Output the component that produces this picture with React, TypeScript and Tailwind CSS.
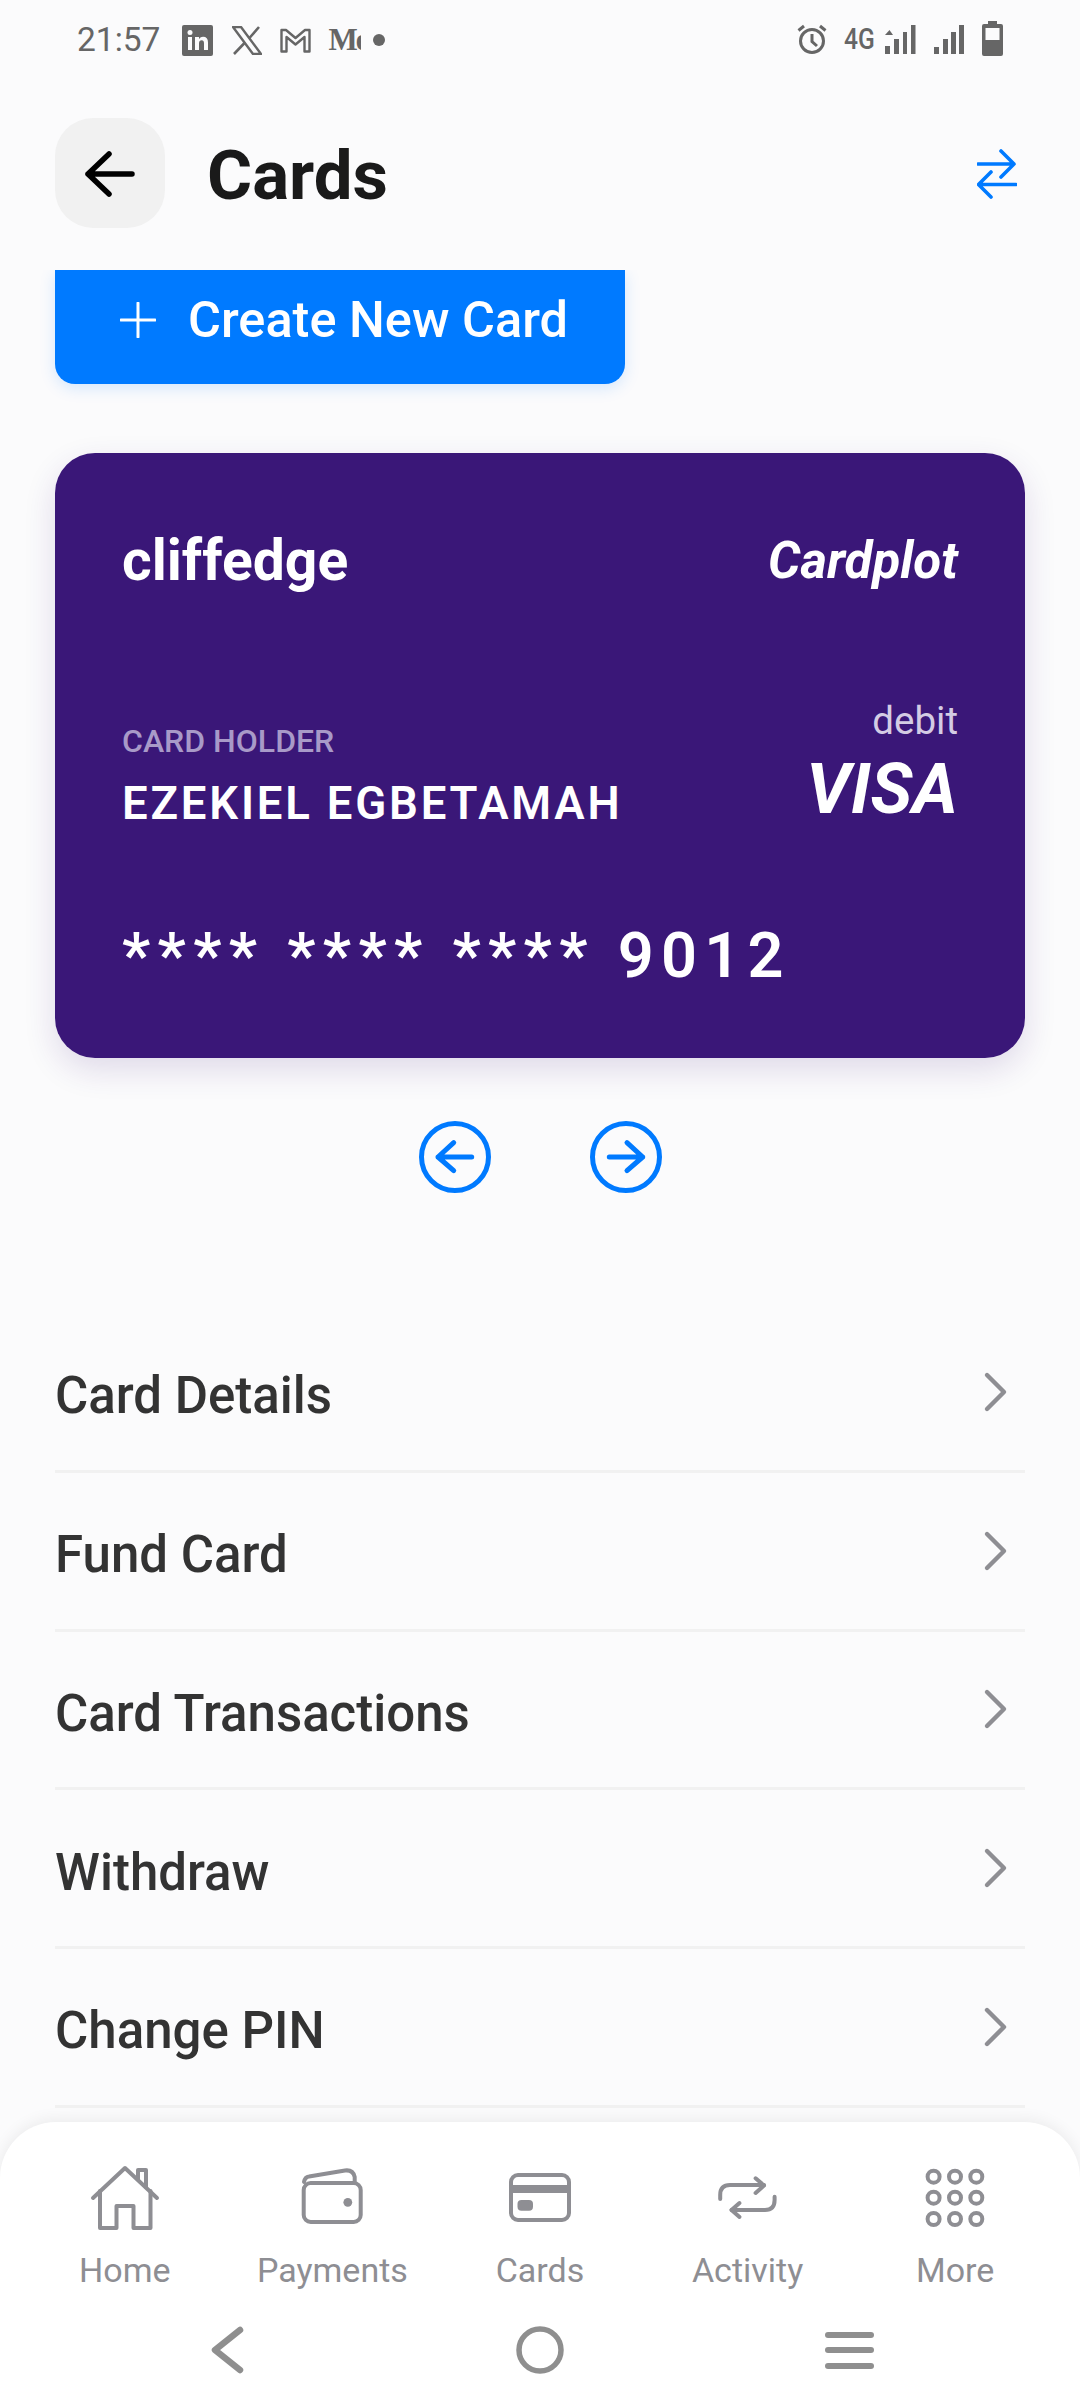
import React from "react";

const Chevron = () => (
  <svg width="30" height="44" viewBox="0 0 30 44" fill="none" stroke="#8e8e93" strokeWidth="4.4" strokeLinecap="round" strokeLinejoin="round">
    <path d="M6 5 L23 22 L6 39" />
  </svg>
);

const rows = ["Card Details", "Fund Card", "Card Transactions", "Withdraw", "Change PIN"];

const NavIcon = ({ children }: { children: React.ReactNode }) => (
  <svg width="72" height="72" viewBox="0 0 72 72" fill="none" stroke="#8e8e93" strokeWidth="4" strokeLinecap="round" strokeLinejoin="round">
    {children}
  </svg>
);

const nav: { label: string; icon: React.ReactNode }[] = [
  {
    label: "Home",
    icon: (
      <NavIcon>
        <path d="M4 36 L36 6 L68 36" />
        <path d="M49 17 V8 H57 V25" />
        <path d="M11 29 V66 H27.5 V44 H44.5 V66 H61.5 V29" />
      </NavIcon>
    ),
  },
  {
    label: "Payments",
    icon: (
      <NavIcon>
        <rect x="7.7" y="21" width="57" height="39" rx="7" />
        <path d="M8 20 Q9 15 13 14.5 L49 8.5 Q57 7.5 58.7 15 V20" />
        <circle cx="51.8" cy="40.3" r="4.4" fill="#8e8e93" stroke="none" />
      </NavIcon>
    ),
  },
  {
    label: "Cards",
    icon: (
      <NavIcon>
        <rect x="7" y="13" width="58" height="45" rx="7" />
        <rect x="7" y="23" width="58" height="8" fill="#8e8e93" stroke="none" />
        <rect x="13.5" y="38" width="15.5" height="10.7" rx="4" fill="#8e8e93" stroke="none" />
      </NavIcon>
    ),
  },
  {
    label: "Activity",
    icon: (
      <NavIcon>
        <path d="M8.2 37 V33 Q8.2 23 18 23 H52" />
        <path d="M43.6 16.3 L52 23.5 L43.6 31" />
        <path d="M62.6 34.7 V38 Q62.6 48 53 48 H19.5" />
        <path d="M27.5 41 L19.5 48 L27.5 55" />
      </NavIcon>
    ),
  },
  {
    label: "More",
    icon: (
      <NavIcon>
        {[14.6, 36, 57.3].map((x) =>
          [14.7, 35.7, 57].map((y) => <circle key={`${x}-${y}`} cx={x} cy={y} r="6" />)
        )}
      </NavIcon>
    ),
  },
];

const StatusBar = () => (
  <div className="flex h-[78px] items-start justify-between text-[#666666]">
    <div className="flex items-center pl-[77px] pt-[20px]">
      <span className="text-[33.5px] leading-[40px]">21:57</span>
      <svg className="ml-[22px]" width="31" height="31" viewBox="0 0 31 31">
        <rect x="0" y="0" width="31" height="31" rx="2" fill="#666666" />
        <rect x="6" y="12" width="4" height="13" fill="#fbfbfc" />
        <circle cx="8" cy="7.5" r="2.5" fill="#fbfbfc" />
        <path d="M13 12 H17 V14 Q18.5 11.7 21 11.7 Q26 11.7 26 17.5 V25 H22 V18.5 Q22 15.2 19.7 15.2 Q17 15.2 17 18.5 V25 H13 Z" fill="#fbfbfc" />
      </svg>
      <svg className="ml-[19px]" width="30" height="29" viewBox="0 0 30 29" fill="none">
        <path d="M1 1 H9 L29 28 H21 Z" stroke="#666666" strokeWidth="2.4" strokeLinejoin="round" />
        <path d="M27 1 L17 12.5 M13 16.5 L2 28" stroke="#666666" strokeWidth="2.6" />
      </svg>
      <svg className="ml-[18px]" width="31" height="25" viewBox="0 0 31 25" fill="none" stroke="#666666" strokeWidth="2.4" strokeLinejoin="round">
        <path d="M1.5 23.5 V2 H6 L15.5 10 L25 2 H29.5 V23.5 H24.5 V9 L15.5 16.5 L6.5 9 V23.5 Z" />
      </svg>
      <div className="ml-[17px] h-[28px] w-[33px] overflow-hidden whitespace-nowrap text-[31px] leading-[28px] font-bold tracking-[-2px] [font-family:'Liberation_Serif',serif]">
        Me
      </div>
      <span className="ml-[12px] h-[12px] w-[12px] rounded-full bg-[#666666]" />
    </div>
    <div className="flex items-center pr-[77px] pt-[21px]">
      <svg width="30" height="30" viewBox="0 0 30 30" fill="none" stroke="#666666" strokeWidth="3">
        <circle cx="15" cy="17" r="11.5" />
        <path d="M15 10 V17.5 L20 22" />
        <path d="M1.5 6.5 L7 2 M28.5 6.5 L23 2" />
      </svg>
      <span className="ml-[17px] inline-block w-[30px] origin-left scale-x-[0.82] text-[30px] leading-[32px] font-medium whitespace-nowrap">4G</span>
      <svg className="ml-[10px]" width="32" height="30" viewBox="0 0 32 30" fill="#666666">
        <path d="M1 11 L5.5 6 L9 11 Z" />
        <rect x="1" y="22" width="5" height="8" />
        <rect x="10" y="15" width="5" height="15" />
        <rect x="19" y="8" width="4" height="22" />
        <rect x="27" y="1" width="4.5" height="29" />
      </svg>
      <svg className="ml-[17px]" width="32" height="30" viewBox="0 0 32 30" fill="#666666">
        <rect x="1" y="23" width="5" height="7" />
        <rect x="10" y="15" width="5" height="15" />
        <rect x="18" y="8" width="5" height="22" />
        <rect x="26" y="1" width="5" height="29" />
      </svg>
      <svg className="ml-[17px]" width="21" height="36" viewBox="0 0 21 36">
        <path d="M6 0 H15 V3 H19 Q21 3 21 5 V33 Q21 35 19 35 H2 Q0 35 0 33 V5 Q0 3 2 3 H6 Z" fill="#666666" />
        <rect x="3.5" y="7" width="14" height="12" fill="#fbfbfc" />
      </svg>
    </div>
  </div>
);

export default function App() {
  return (
    <div className="relative flex h-[2408px] w-[1080px] flex-col overflow-hidden bg-[#fbfbfc] [font-family:Roboto,sans-serif]">
      <StatusBar />

      <header className="flex h-[192px] items-start justify-between pl-[55px] pr-[63px] pt-[40px]">
        <div className="flex items-center">
          <div className="flex h-[110px] w-[110px] items-center justify-center rounded-[38px] bg-[#f1f1f1]">
            <svg width="110" height="110" viewBox="0 0 110 110" fill="none" stroke="#000000" strokeWidth="5.5" strokeLinecap="round" strokeLinejoin="round">
              <path d="M33 56 H77 M54 36 L33 56 L54 76" />
            </svg>
          </div>
          <h1 className="ml-[42px] pt-[5px] text-[69px] leading-[80px] font-bold text-[#1a1a1a]">Cards</h1>
        </div>
        <svg className="mt-[31px]" width="40" height="50" viewBox="0 0 40 50" fill="none" stroke="#007aff" strokeWidth="3.6" strokeLinecap="round" strokeLinejoin="round">
          <path d="M1 15 H37 M24 2 L37 15 L24 28" />
          <path d="M39 35.5 H3 M14 23 L1.5 35.5 L14 48" />
        </svg>
      </header>

      <main className="min-h-0 flex-1 overflow-hidden px-[55px]">
        <button className="flex h-[114px] w-[570px] items-center rounded-b-[20px] bg-[#007aff] pb-[15px] pl-[65px] text-white shadow-[0_4px_16px_rgba(0,122,255,0.16)]">
          <svg width="36" height="36" viewBox="0 0 36 36" fill="none" stroke="#ffffff" strokeWidth="3" strokeLinecap="round">
            <path d="M18 1 V35 M1 18 H35" />
          </svg>
          <span className="ml-[32px] text-[50.5px] leading-[56px] font-medium">Create New Card</span>
        </button>

        <section className="mt-[69px] flex h-[605px] w-[970px] flex-col rounded-[40px] bg-[#3a1778] px-[67px] text-white shadow-[0_12px_32px_rgba(58,23,120,0.14)]">
          <div className="flex items-center justify-between pt-[76px]">
            <span className="text-[57px] leading-[64px] font-bold">cliffedge</span>
            <span className="text-[51px] leading-[64px] font-bold italic">Cardplot</span>
          </div>
          <div className="mt-[106px] flex items-end justify-between">
            <div>
              <div className="text-[32px] leading-[36px] font-medium text-[#a89ac8]">CARD HOLDER</div>
              <div className="mt-[20px] text-[45.5px] leading-[50px] font-semibold tracking-[2.8px]">EZEKIEL EGBETAMAH</div>
            </div>
            <div className="flex flex-col items-end">
              <span className="text-[38.5px] leading-[44px] text-[#d4cce4]">debit</span>
              <span className="mt-[6px] text-[70px] leading-[80px] font-bold italic">VISA</span>
            </div>
          </div>
          <div className="mt-[91px] text-[63px] leading-[72px] font-semibold tracking-[7.3px] whitespace-nowrap">**** **** **** 9012</div>
        </section>

        <div className="mt-[63px] flex justify-center gap-[99px]">
          <svg width="72" height="72" viewBox="0 0 72 72" fill="none" stroke="#007aff" strokeWidth="5" strokeLinecap="round" strokeLinejoin="round">
            <circle cx="36" cy="36" r="33.5" />
            <path d="M19 36 H52.7 M34.7 21.7 L19 36 L34.7 49.7" />
          </svg>
          <svg width="72" height="72" viewBox="0 0 72 72" fill="none" stroke="#007aff" strokeWidth="5" strokeLinecap="round" strokeLinejoin="round">
            <circle cx="36" cy="36" r="33.5" />
            <path d="M19.3 36 H52.7 M37 21.7 L52.7 36 L37 49.7" />
          </svg>
        </div>

        <ul className="mt-[121px]">
          {rows.map((r) => (
            <li key={r} className="flex h-[158.75px] items-center justify-between border-b-[3px] border-[#f1f1f1] pr-[14px] text-[51px] leading-[60px] font-medium text-[#333333]">
              <span className="pt-[9px]">{r}</span>
              <Chevron />
            </li>
          ))}
        </ul>
      </main>

      <nav className="relative z-10 h-[286px] shrink-0 rounded-t-[56px] bg-white shadow-[0_-2px_16px_rgba(0,0,0,0.07)]">
        <div className="grid grid-cols-5 px-[21px] pt-[40px]">
          {nav.map((n) => (
            <div key={n.label} className="flex flex-col items-center">
              {n.icon}
              <span className="mt-[14px] text-[34px] leading-[44px] font-[450] text-[#8e8e93]">{n.label}</span>
            </div>
          ))}
        </div>
        <div className="mt-[33px] flex items-center justify-between pl-[208px] pr-[206px]">
          <svg width="40" height="50" viewBox="0 0 40 50" fill="none" stroke="#8f8f8f" strokeWidth="6.5" strokeLinecap="round" strokeLinejoin="round">
            <path d="M32 5 L7 25 L32 45" />
          </svg>
          <svg className="ml-[7px]" width="48" height="48" viewBox="0 0 48 48" fill="none" stroke="#8f8f8f" strokeWidth="5.5">
            <circle cx="24" cy="24" r="21" />
          </svg>
          <div className="flex w-[49px] flex-col gap-[9.5px]">
            <span className="h-[6px] rounded-full bg-[#8f8f8f]" />
            <span className="h-[6px] rounded-full bg-[#8f8f8f]" />
            <span className="h-[6px] rounded-full bg-[#8f8f8f]" />
          </div>
        </div>
      </nav>
    </div>
  );
}
